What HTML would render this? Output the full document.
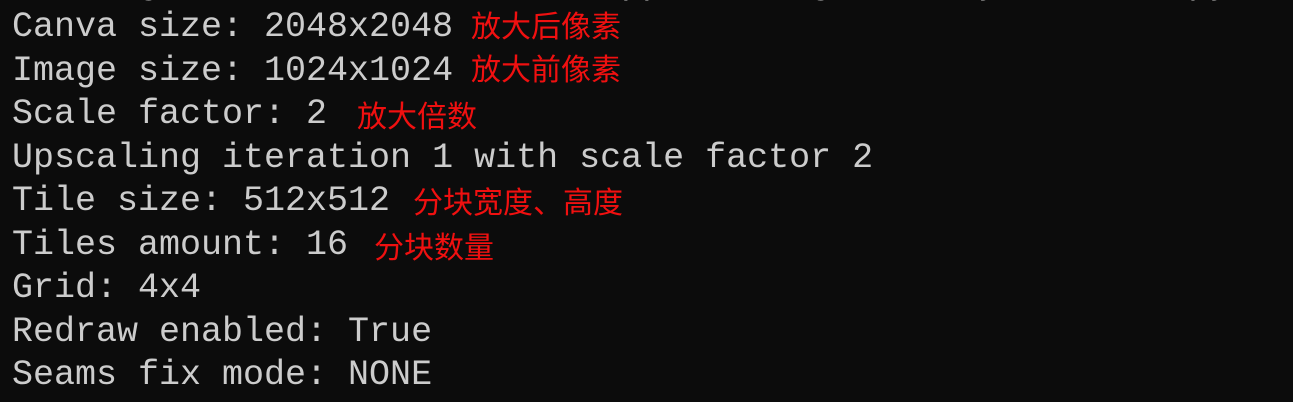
<html><head><style>
body{margin:0;width:1293px;height:402px;background:#0c0c0c;overflow:hidden;position:relative}
.l{position:absolute;left:12px;font:35px/43.5px "Liberation Mono",monospace;color:#cccccc;white-space:pre}
.c{position:absolute;font:30px/43.5px "Noto Sans CJK SC",sans-serif;color:#f01010;white-space:pre;letter-spacing:0px}
</style></head><body>
<div class="l" style="top:-37px">      g                      pp       g       y         py</div>
<div class="l" style="top:6px">Canva size: 2048x2048</div><div class="c" style="left:471px;top:3px">放大后像素</div>
<div class="l" style="top:49.5px">Image size: 1024x1024</div><div class="c" style="left:471px;top:46px">放大前像素</div>
<div class="l" style="top:93px">Scale factor: 2</div><div class="c" style="left:357px;top:93px">放大倍数</div>
<div class="l" style="top:136.5px">Upscaling iteration 1 with scale factor 2</div>
<div class="l" style="top:180px">Tile size: 512x512</div><div class="c" style="left:413px;top:179px">分块宽度、高度</div>
<div class="l" style="top:223.5px">Tiles amount: 16</div><div class="c" style="left:374px;top:224px">分块数量</div>
<div class="l" style="top:267px">Grid: 4x4</div>
<div class="l" style="top:310.5px">Redraw enabled: True</div>
<div class="l" style="top:354px">Seams fix mode: NONE</div>
</body></html>
